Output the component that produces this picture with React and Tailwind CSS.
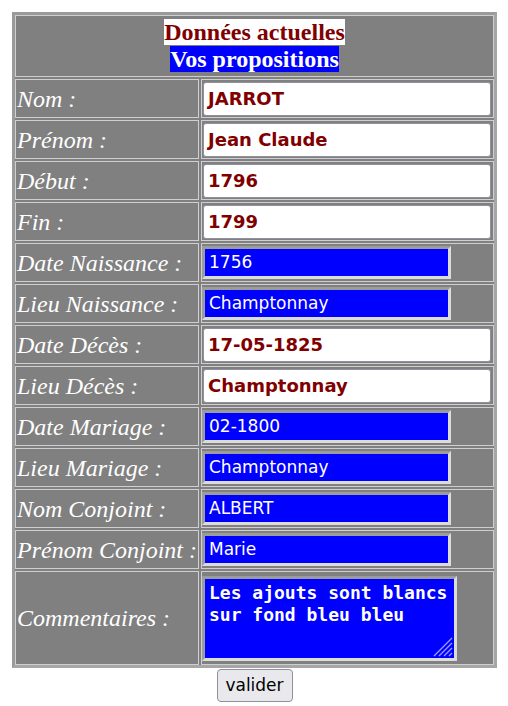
const rows = [
  { label: "Nom :", value: "JARROT", kind: "cur" },
  { label: "Prénom :", value: "Jean Claude", kind: "cur" },
  { label: "Début :", value: "1796", kind: "cur" },
  { label: "Fin :", value: "1799", kind: "cur" },
  { label: "Date Naissance :", value: "1756", kind: "new" },
  { label: "Lieu Naissance :", value: "Champtonnay", kind: "new" },
  { label: "Date Décès :", value: "17-05-1825", kind: "cur" },
  { label: "Lieu Décès :", value: "Champtonnay", kind: "cur" },
  { label: "Date Mariage :", value: "02-1800", kind: "new" },
  { label: "Lieu Mariage :", value: "Champtonnay", kind: "new" },
  { label: "Nom Conjoint :", value: "ALBERT", kind: "new" },
  { label: "Prénom Conjoint :", value: "Marie", kind: "new" },
];

function Label({ children }) {
  return (
    <div className="border border-[#cfcfcf] flex items-center pl-[1px] text-white italic text-[24px] font-['Liberation_Serif',serif] whitespace-nowrap">
      {children}
    </div>
  );
}

export default function App() {
  return (
    <div className="bg-white w-[508px] min-h-[706px]">
      <div className="pt-[12px] pl-[12px] w-[497px]">
        <div className="w-[485px] border-[3px] border-t-[#9a9a9a] border-l-[#9a9a9a] border-b-[#a6a6a6] border-r-[#a6a6a6] bg-[#808080] grid grid-cols-[184px_293px] grid-rows-[62px_repeat(12,39px)_94px] gap-[2px]">
          <div className="col-span-2 border border-[#cfcfcf] flex items-center justify-center">
            <div className="text-center font-['Liberation_Serif',serif] font-bold text-[24px] leading-[27px]">
              <span className="bg-white text-[#800000]">Données actuelles</span>
              <br />
              <span className="bg-[#0000ff] text-white">Vos propositions</span>
            </div>
          </div>
          {rows.map((r, i) => (
            <React.Fragment key={i}>
              <Label>{r.label}</Label>
              <div className="border border-[#cfcfcf] flex items-center">
                {r.kind === "cur" ? (
                  <div className="ml-[1px] w-[288px] h-[34px] bg-white border border-[#8f8f9d] rounded-[3px] flex items-center pl-[4px] text-[#800000] font-bold text-[18px] font-['DejaVu_Sans',sans-serif] whitespace-nowrap">
                    {r.value}
                  </div>
                ) : (
                  <div className="w-[249px] h-[33px] bg-[#0000ff] border-[3px] border-t-[#9c9c9c] border-l-[#9c9c9c] border-b-[#dcdcdc] border-r-[#dcdcdc] flex items-center pl-[4px] text-white text-[17px] font-['DejaVu_Sans',sans-serif] whitespace-nowrap">
                    {r.value}
                  </div>
                )}
              </div>
            </React.Fragment>
          ))}
          <Label>Commentaires :</Label>
          <div className="border border-[#cfcfcf] flex items-center">
            <div className="relative w-[255px] h-[85px] bg-[#0000ff] border-[3px] border-t-[#9c9c9c] border-l-[#9c9c9c] border-b-[#dcdcdc] border-r-[#dcdcdc] pl-[4px] pt-[3px] text-white font-bold text-[18px] leading-[22px] font-['DejaVu_Sans_Mono',monospace] whitespace-pre">
              {"Les ajouts sont blancs\nsur fond bleu bleu"}
              <svg className="absolute right-[1px] bottom-[1px]" width="22" height="22" viewBox="0 0 22 22">
                <g stroke="#9a9aff" strokeWidth="1.3">
                  <line x1="21" y1="3" x2="3" y2="21" />
                  <line x1="21" y1="8" x2="8" y2="21" />
                  <line x1="21" y1="13" x2="13" y2="21" />
                  <line x1="21" y1="18" x2="18" y2="21" />
                </g>
              </svg>
            </div>
          </div>
        </div>
        <div className="flex justify-center mt-[1px]">
          <button className="w-[76px] h-[33px] bg-[#e9e9ed] border border-[#8f8f9d] rounded-[4px] text-black text-[17px] font-['DejaVu_Sans',sans-serif]">
            valider
          </button>
        </div>
      </div>
    </div>
  );
}

import React from "react";
